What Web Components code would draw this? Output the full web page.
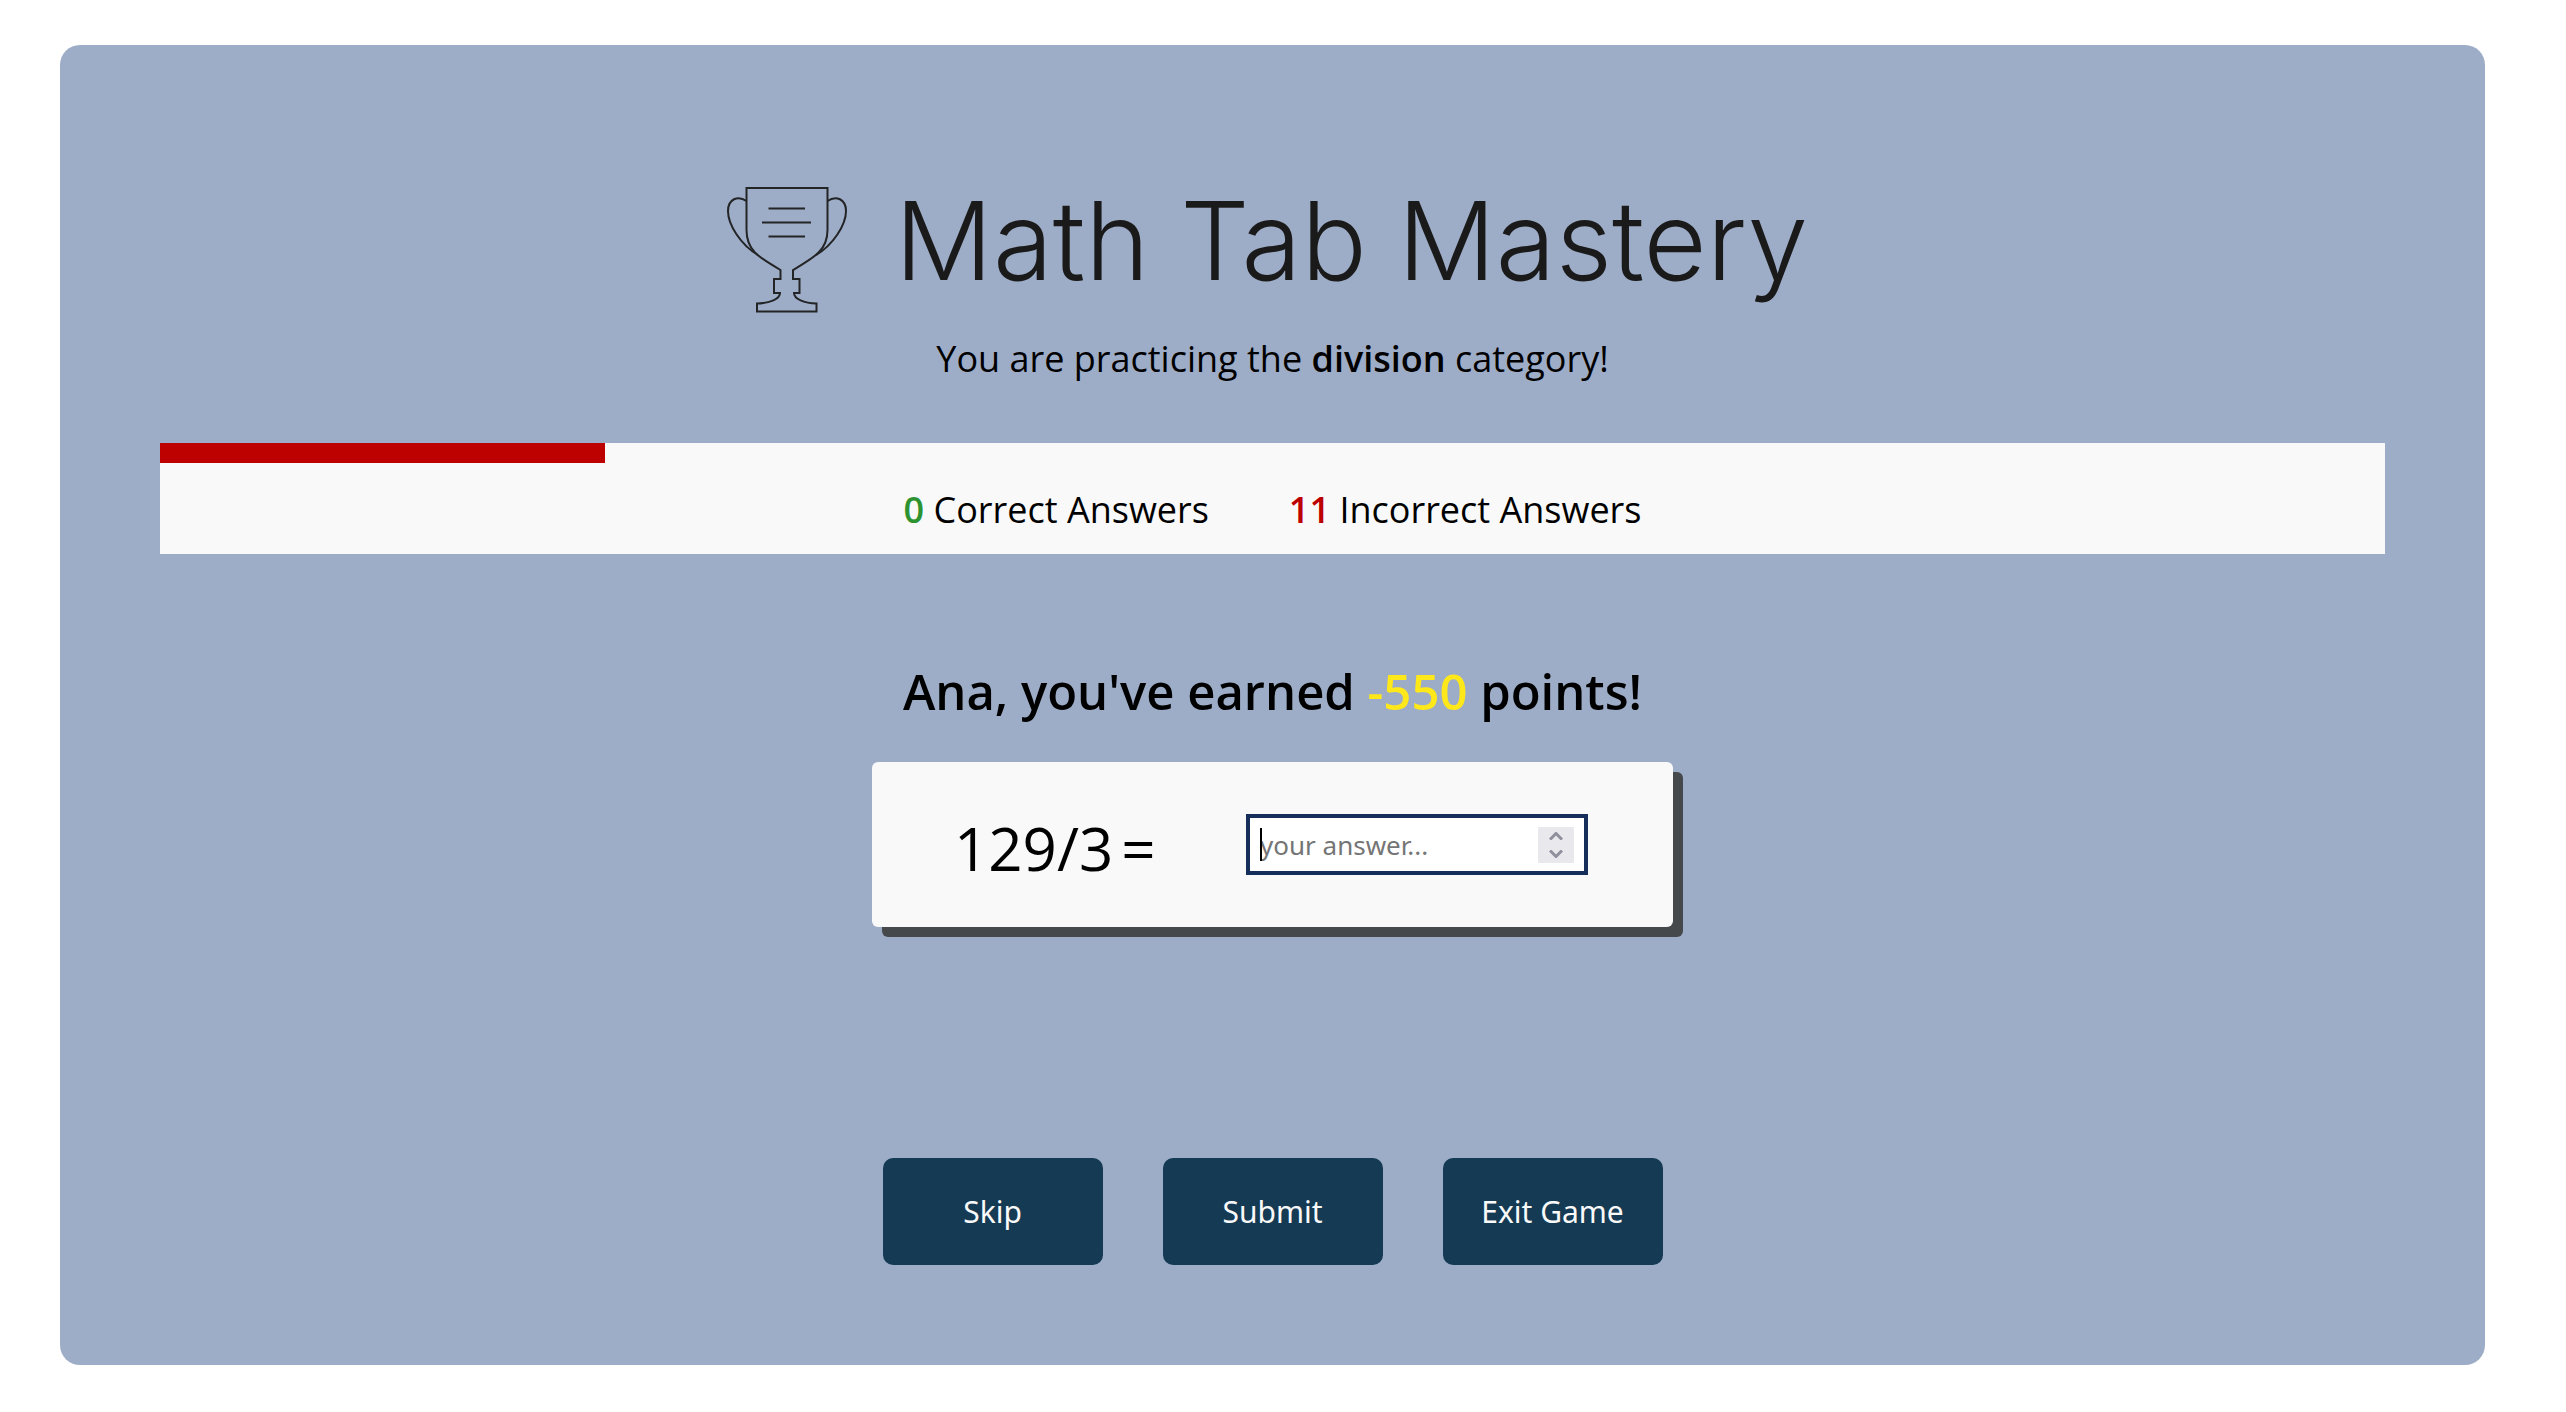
<!DOCTYPE html>
<html lang="en">
<head>
<meta charset="utf-8">
<meta name="viewport" content="width=device-width, initial-scale=1">
<title>Math Tab Mastery</title>
<style>
  body { margin: 0; background: #fff; color: #000; font-family: "Open Sans", "Noto Sans", sans-serif; font-size: 36px; line-height: 54px; }
  strong { font-weight: 600; }
</style>
</head>
<body>
<math-game>
  <game-logo></game-logo>
  <game-category>You are practicing the <strong>division</strong> category!</game-category>
  <score-board correct="0" incorrect="11" progress="20"></score-board>
  <points-line player="Ana" points="-550"></points-line>
  <question-card expression="129/3"></question-card>
  <game-actions>
    <game-button>Skip</game-button>
    <game-button>Submit</game-button>
    <game-button>Exit Game</game-button>
  </game-actions>
</math-game>

<script>
class Base extends HTMLElement {
  connectedCallback() {
    if (this.shadowRoot) return;
    this.attachShadow({ mode: "open" }).innerHTML =
      "<style>*{box-sizing:border-box}" + this.styles() + "</style>" + this.markup();
  }
}

class MathGame extends Base {
  styles() { return `
    :host { display: block; padding: 45px 81px 47px 60px; }
    main { display: flex; flex-direction: column; align-items: center; padding: 141px 100px 100px; border-radius: 20px; background: #9eadc7; }`; }
  markup() { return `<main><slot></slot></main>`; }
}

class GameLogo extends Base {
  styles() { return `
    :host { display: block; }
    h1 { display: flex; align-items: flex-start; gap: 46px; margin: 0; padding-right: 12px; color: #1a1a1a; font: 350 109px/108px Inter, "Liberation Sans", sans-serif; white-space: nowrap; }
    svg { display: block; width: 124px; height: 128px; flex: none; }`; }
  markup() { return `<h1>
    <svg viewBox="724 186 124 128" fill="none" stroke="#222426" stroke-width="2" aria-hidden="true">
      <path d="M779.500 279V270C757 257 745.500 250 745.500 230V188H826.500V230C826.500 250 814 257 792 270V279H798.500V293H793C793 299 803 303 815.500 303.500V311.500H756V303.500C769 303 779 299 779 293H773V279H780.500"/>
      <path d="M745.500 201C737 195 727 199 727 211C727 225 740 245 757 255M826.500 201C835 195 845 199 845 211C845 225 832 245 815 255"/>
      <path d="M767.500 208.500H804M761 222.500H810M767.500 236.500H804"/>
    </svg><span>Math Tab Mastery</span></h1>`; }
}

class GameCategory extends Base {
  styles() { return `:host { display: block; } p { margin: 18px 0 57px; text-align: center; }`; }
  markup() { return `<p><slot></slot></p>`; }
}

class ScoreBoard extends Base {
  styles() { return `
    :host { display: block; align-self: stretch; background: #f9f9f9; }
    .bar { height: 20px; background: #bd0000; }
    .scores { display: flex; justify-content: center; gap: 80px; padding: 20px 0 17px; }
    b { font-weight: 600; }
    .good { color: #2d9331; } .bad { color: #bd0000; }`; }
  markup() { return `
    <div class="bar" style="width:${this.getAttribute("progress")}%"></div>
    <div class="scores">
      <span><b class="good">${this.getAttribute("correct")}</b> Correct Answers</span>
      <span><b class="bad">${this.getAttribute("incorrect")}</b> Incorrect Answers</span>
    </div>`; }
}

class PointsLine extends Base {
  styles() { return `
    :host { display: block; }
    h2 { margin: 101px 0 35px; font-size: 49px; line-height: 72px; font-weight: 600; text-align: center; }
    span { color: #ffe81a; }`; }
  markup() { return `<h2>${this.getAttribute("player")}, you've earned <span>${this.getAttribute("points")}</span> points!</h2>`; }
}

class QuestionCard extends Base {
  styles() { return `
    :host { display: block; width: 801px; max-width: 100%; }
    form { display: flex; align-items: center; justify-content: space-between; height: 165px; padding: 0 85px 0 82px; border-radius: 6px; background: #f9f9f9; box-shadow: 10px 10px #46494c; }
    label { display: flex; gap: 8px; padding-top: 6px; font-size: 60px; line-height: 80px; }
    .field { display: flex; align-items: center; position: relative; width: 342px; height: 61px; padding: 0 10px; border: 4px solid #152f5a; background: #fff; }
    input { flex: 1; min-width: 0; height: 40px; margin: 0; padding: 0; border: 0; outline: 0; background: none; color: #000; caret-color: transparent; font: 26px/40px "Noto Sans", "Open Sans", sans-serif; appearance: textfield; -moz-appearance: textfield; }
    input::-webkit-inner-spin-button { appearance: none; margin: 0; }
    input::placeholder { color: #757575; opacity: 1; }
    .caret { position: absolute; left: 10px; top: 10px; width: 2px; height: 33px; background: #000; }
    .spin { display: flex; flex-direction: column; width: 36px; height: 36px; background: #e9e9ed; }
    button { display: flex; flex: 1; align-items: center; justify-content: center; padding: 0; border: 0; background: none; }
    svg { display: block; width: 14px; height: 8px; }
    path { fill: none; stroke: #8f8f9d; stroke-width: 3; }`; }
  markup() { return `
    <form>
      <label for="answer"><span>${this.getAttribute("expression")}</span><span>=</span></label>
      <div class="field">
        <input id="answer" type="number" placeholder="your answer...">
        <i class="caret"></i>
        <div class="spin">
          <button type="button" aria-label="Increase"><svg viewBox="0 0 14 8"><path d="M1 7.500 7 1.500 13 7.500"/></svg></button>
          <button type="button" aria-label="Decrease"><svg viewBox="0 0 14 8"><path d="M1 .5 7 6.500 13 .5"/></svg></button>
        </div>
      </div>
    </form>`; }
}

class GameActions extends Base {
  styles() { return `:host { display: flex; flex-wrap: wrap; justify-content: center; gap: 60px; margin-top: 231px; }`; }
  markup() { return `<slot></slot>`; }
}

class GameButton extends Base {
  styles() { return `
    :host { display: block; }
    button { display: block; width: 220px; height: 107px; padding: 0; border: 0; border-radius: 10px; background: #153a54; color: #f9f9f9; font: 30px/40px "Noto Sans", "Open Sans", sans-serif; cursor: pointer; }`; }
  markup() { return `<button type="button"><slot></slot></button>`; }
}

customElements.define("math-game", MathGame);
customElements.define("game-logo", GameLogo);
customElements.define("game-category", GameCategory);
customElements.define("score-board", ScoreBoard);
customElements.define("points-line", PointsLine);
customElements.define("question-card", QuestionCard);
customElements.define("game-actions", GameActions);
customElements.define("game-button", GameButton);
</script>
</body>
</html>
